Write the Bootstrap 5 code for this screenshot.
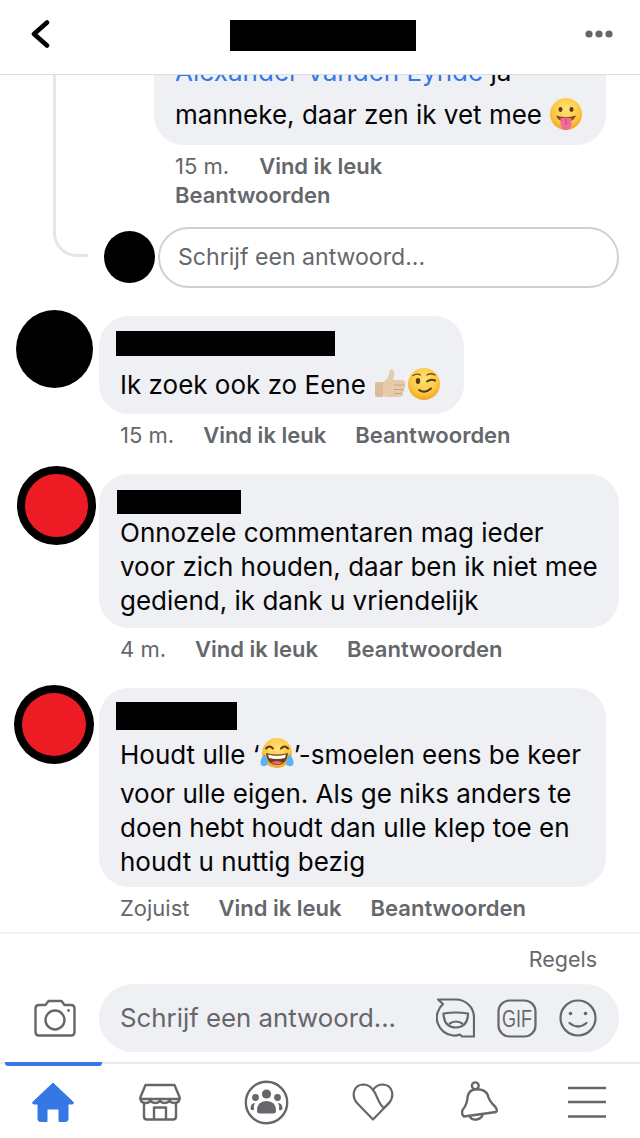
<!DOCTYPE html>
<html lang="nl">
<head>
    <title>Reacties</title>
    <meta charset="utf-8">
    <meta name="viewport" content="width=device-width, initial-scale=1">
    <link href="https://cdn.jsdelivr.net/npm/bootstrap@5.3.3/dist/css/bootstrap.min.css" rel="stylesheet">
    <script src="https://cdn.jsdelivr.net/npm/bootstrap@5.3.3/dist/js/bootstrap.bundle.min.js"></script>
    <style>
        html, body { height: 1138px; overflow: hidden; }
        body { font-family: Inter, "Liberation Sans", sans-serif; color: #050505; background: #fff; }
        .app { height: 1138px; }
        .topbar { height: 75px; border-bottom: 1px solid #dadde1; padding: 0 27px 0 31px; position: relative; z-index: 2; background: #fff; }
        .topbar svg { margin-bottom: 6px; }
        .redact { background: #000; }
        .title-bar { width: 186px; height: 31px; margin: -3px 0 0 10px; }
        .feed { height: 857px; overflow: hidden; position: relative; }

        /* nested reply, top is cut off by the header */
        .thread { display: flow-root; height: 213px; padding: 0 0 0 154px; position: relative; }
        .thread-line { position: absolute; left: 53px; top: 0; width: 35px; height: 182px; border-left: 3px solid #e4e6eb; border-bottom: 3px solid #e4e6eb; border-bottom-left-radius: 24px; }
        .bubble { background: #eff0f4; border-radius: 30px; font-size: 26px; line-height: 34px; }
        .bubble-nested { width: 452px; height: 110px; margin-top: -40px; padding: 0 21px; }
        .bubble-nested .cut-line { height: 62px; padding-top: 20px; }
        .mention { color: #3578e5; }
        .meta { font-size: 22px; line-height: 29px; color: #65676b; }
        .meta b { font-weight: 600; }
        .meta-nested { padding: 7px 0 0 21px; max-width: 260px; column-gap: 30px; }
        .meta-row { column-gap: 29px; height: 29px; padding-left: 21px; margin-top: 7px; white-space: nowrap; }
        .reply-row { position: absolute; left: 104px; top: 152px; }
        .dot-avatar { width: 51px; height: 52px; border-radius: 50%; background: #000; margin-top: 4px; }
        .reply-input { width: 461px; height: 61px; margin-left: 3px; border: 2px solid #ced0d4; border-radius: 31px; padding-left: 18px; font-size: 23.1px; color: #65676b; background: #fff; }

        .comment-a { margin-top: 28px; padding-left: 16px; }
        .comment-b { margin-top: 24px; padding-left: 17px; }
        .comment-c { margin-top: 24px; padding-left: 14px; }
        .avatar-black { width: 77px; height: 78px; border-radius: 50%; background: #000; margin: -6px 6px 0 0; flex: none; }
        .avatar-red { width: 79px; height: 79px; border-radius: 50%; background: #ed1c24; border: 8px solid #000; flex: none; }
        .comment-b .avatar-red { margin: -8px 3px 0 0; }
        .comment-c .avatar-red { margin: -3px 5px 0 0; width: 80px; }
        .bubble-a { width: 365px; height: 98px; padding: 15px 21px 0 21px; }
        .bubble-b { width: 520px; height: 154px; padding: 16px 18px 0 21px; }
        .bubble-c { width: 507px; height: 199px; padding: 14px 18px 0 21px; }
        .name-a { width: 219px; height: 25px; margin: 0 0 11px -4px; }
        .name-b { width: 124px; height: 24px; margin: 0 0 2px -3px; }
        .name-c { width: 121px; height: 28px; margin: 0 0 7px -4px; }
        .bubble-c .first-line { height: 40px; }
        .emoji { width: 34px; height: 34px; vertical-align: -7px; }

        .footer-box { height: 206px; border-top: 2px solid #f0f1f3; background: #fff; }
        .rules { height: 50px; padding: 10px 43px 0 0; font-size: 21.5px; line-height: 30px; color: #65676b; text-align: right; }
        .composer { height: 68px; padding-right: 21px; }
        .camera-slot { width: 99px; padding-left: 34px; }
        .pill { flex: 1; height: 68px; border-radius: 34px; background: #eff0f4; padding: 0 22px 0 21px; font-size: 25.8px; color: #65676b; }
        .pill-icons { column-gap: 22px; }
        .tabbar { height: 76px; margin-top: 10px; border-top: 2px solid #e9eaec; position: relative; }
        .tab-item { width: 106.67px; height: 74px; padding-top: 2px; }
        .tab-active-bar { position: absolute; left: 5px; top: -2px; width: 97px; height: 4px; background: #3578e5; border-radius: 0 0 3px 3px; }
    </style>
</head>
<body>
<svg width="0" height="0" class="position-absolute">
    <defs>
        <radialGradient id="faceFill" cx="50%" cy="35%" r="70%">
            <stop offset="0" stop-color="#ffe27a"/>
            <stop offset=".65" stop-color="#fbc53f"/>
            <stop offset="1" stop-color="#ee9a1e"/>
        </radialGradient>
    </defs>
</svg>

<div class="app d-flex flex-column">
    <div class="topbar d-flex align-items-center justify-content-between">
        <svg width="20" height="30" viewBox="0 0 20 30">
            <path d="M16 3.5 L3 15 L16 26.5" fill="none" stroke="#000" stroke-width="4.6" stroke-linecap="round" stroke-linejoin="round"/>
        </svg>
        <div class="redact title-bar"></div>
        <svg width="28" height="8" viewBox="0 0 28 8" fill="#65676b">
            <circle cx="4" cy="4" r="3.6"/><circle cx="14" cy="4" r="3.6"/><circle cx="24" cy="4" r="3.6"/>
        </svg>
    </div>

    <div class="feed">
        <div class="thread">
            <div class="thread-line"></div>
            <div class="bubble bubble-nested">
                <div class="cut-line text-nowrap"><span class="mention">Alexander Vanden Eynde</span> ja</div>
                <div class="text-nowrap">manneke, daar zen ik vet mee
                    <svg class="emoji" viewBox="0 0 34 34">
                        <circle cx="17" cy="17" r="16" fill="url(#faceFill)"/>
                        <ellipse cx="11.5" cy="12.5" rx="2" ry="2.4" fill="#5a3a12"/>
                        <ellipse cx="22.5" cy="12.5" rx="2" ry="2.4" fill="#5a3a12"/>
                        <path d="M7 18.5 Q17 22 27 18.5 Q25 23 21.5 24 L12.5 24 Q9 23 7 18.5Z" fill="#7a4a14"/>
                        <path d="M11.5 21 H22.5 V27 A5.5 6 0 0 1 11.5 27Z" fill="#f06a9a"/>
                        <path d="M17 22 V28" stroke="#c9416f" stroke-width="1"/>
                    </svg>
                </div>
            </div>
            <div class="meta meta-nested d-flex flex-wrap">
                <span>15 m.</span><b>Vind ik leuk</b><b>Beantwoorden</b>
            </div>
            <div class="reply-row d-flex align-items-start">
                <div class="dot-avatar"></div>
                <div class="reply-input d-flex align-items-center">Schrijf een antwoord...</div>
            </div>
        </div>

        <div class="comment-a d-flex">
            <div class="avatar-black"></div>
            <div>
                <div class="bubble bubble-a">
                    <div class="redact name-a"></div>
                    <div class="text-nowrap">Ik zoek ook zo Eene
                        <svg class="emoji" viewBox="0 0 34 34">
                            <path d="M4 15 H10 V30 H4 Q2 30 2 28 V17 Q2 15 4 15Z" fill="#d9bd9c"/>
                            <path d="M10 15 Q15 12 16 7 Q16.5 2 19 2.5 Q22 3.5 21 9 L20 13 H30 Q33 14 32 17 Q33 20 31 21.5 Q32 24 30 25.5 Q30.5 29 27 30 H14 Q11 30 10 28Z" fill="#e6cbab"/>
                            <path d="M21 18 H31 M21 22.5 H30.5 M21 26.5 H29" stroke="#c6a583" stroke-width="1.2" fill="none"/>
                        </svg><svg class="emoji" viewBox="0 0 34 34">
                            <circle cx="17" cy="17" r="16" fill="url(#faceFill)"/>
                            <ellipse cx="11" cy="14" rx="2.2" ry="3" fill="#5a3a12"/>
                            <path d="M6 8.5 Q10 6 13.5 8" fill="none" stroke="#7a4a14" stroke-width="1.4" stroke-linecap="round"/>
                            <path d="M20 14.5 Q24 11.5 28 13.5" fill="none" stroke="#5a3a12" stroke-width="2" stroke-linecap="round"/>
                            <path d="M20 8 Q24 5.5 28 8" fill="none" stroke="#7a4a14" stroke-width="1.4" stroke-linecap="round"/>
                            <path d="M12 23 Q18 27 24 21.5" fill="none" stroke="#5a3a12" stroke-width="2" stroke-linecap="round"/>
                        </svg>
                    </div>
                </div>
                <div class="meta meta-row d-flex">
                    <span>15 m.</span><b>Vind ik leuk</b><b>Beantwoorden</b>
                </div>
            </div>
        </div>

        <div class="comment-b d-flex">
            <div class="avatar-red"></div>
            <div>
                <div class="bubble bubble-b">
                    <div class="redact name-b"></div>
                    <div class="text-nowrap">Onnozele commentaren mag ieder</div>
                    <div class="text-nowrap">voor zich houden, daar ben ik niet mee</div>
                    <div class="text-nowrap">gediend, ik dank u vriendelijk</div>
                </div>
                <div class="meta meta-row d-flex">
                    <span>4 m.</span><b>Vind ik leuk</b><b>Beantwoorden</b>
                </div>
            </div>
        </div>

        <div class="comment-c d-flex">
            <div class="avatar-red"></div>
            <div>
                <div class="bubble bubble-c">
                    <div class="redact name-c"></div>
                    <div class="first-line text-nowrap">Houdt ulle ‘<svg class="emoji" viewBox="0 0 34 34">
                            <circle cx="17" cy="16" r="15" fill="url(#faceFill)"/>
                            <path d="M6 11.5 Q9.5 7.5 13 11.5" fill="none" stroke="#5a3a12" stroke-width="2" stroke-linecap="round"/>
                            <path d="M21 11.5 Q24.5 7.5 28 11.5" fill="none" stroke="#5a3a12" stroke-width="2" stroke-linecap="round"/>
                            <path d="M6 16 Q17 19 28 16 Q27 28 17 28 Q7 28 6 16Z" fill="#6e3d10"/>
                            <path d="M8 17.5 Q17 20 26 17.5 L25 21 Q17 23 9 21Z" fill="#fff"/>
                            <path d="M11 25.5 Q17 22.5 23 25.5 Q17 29.5 11 25.5Z" fill="#e8677e"/>
                            <path d="M4.5 17 Q-1 24 1 28 Q4.5 31 8 27 Q8.5 23 4.5 17Z" fill="#59b3ee"/>
                            <path d="M29.5 17 Q35 24 33 28 Q29.5 31 26 27 Q25.5 23 29.5 17Z" fill="#59b3ee"/>
                        </svg>’-smoelen eens be keer</div>
                    <div class="text-nowrap">voor ulle eigen. Als ge niks anders te</div>
                    <div class="text-nowrap">doen hebt houdt dan ulle klep toe en</div>
                    <div class="text-nowrap">houdt u nuttig bezig</div>
                </div>
                <div class="meta meta-row d-flex">
                    <span>Zojuist</span><b>Vind ik leuk</b><b>Beantwoorden</b>
                </div>
            </div>
        </div>
    </div>

    <div class="footer-box">
        <div class="rules">Regels</div>
        <div class="composer d-flex align-items-center">
            <div class="camera-slot">
                <svg class="d-block" width="42" height="38" viewBox="0 0 42 38" fill="none" stroke="#65676b" stroke-width="2.4" stroke-linejoin="round">
                    <path d="M5 6 H11.5 L14.5 2 H27.5 L30.5 6 H37 Q40.5 6 40.5 9.5 V33 Q40.5 36.5 37 36.5 H5 Q1.5 36.5 1.5 33 V9.5 Q1.5 6 5 6Z"/>
                    <circle cx="21" cy="21" r="9.5"/>
                    <circle cx="34.5" cy="11.5" r="1.4" fill="#65676b" stroke="none"/>
                </svg>
            </div>
            <div class="pill d-flex align-items-center justify-content-between">
                <span>Schrijf een antwoord...</span>
                <div class="pill-icons d-flex align-items-center">
                    <svg width="39" height="40" viewBox="0 0 39 40" fill="none" stroke="#65676b" stroke-width="2.2" stroke-linejoin="round">
                        <path d="M2 1.5 H20 A18 18 0 0 1 38 19.5 V38.5 H26 L24 36.5 Q20 38 17 37.5 A18 18 0 0 1 7 6 Z"/>
                        <path d="M7.5 15.5 Q20 13.5 32 15.5 Q32 29 20 29.5 Q8 29.5 7.5 15.5Z"/>
                        <path d="M13 26 Q20 21 27 26" />
                    </svg>
                    <svg width="40" height="39" viewBox="0 0 40 39" fill="none" stroke="#65676b" stroke-width="2.2">
                        <rect x="1.5" y="1.5" width="37" height="36" rx="11"/>
                        <text x="20" y="27.8" text-anchor="middle" font-family="Liberation Sans, sans-serif" font-size="23" fill="#65676b" stroke="none" textLength="30" lengthAdjust="spacingAndGlyphs">GIF</text>
                    </svg>
                    <svg width="38" height="38" viewBox="0 0 38 38" fill="none" stroke="#65676b" stroke-width="2.2" stroke-linecap="round">
                        <circle cx="19" cy="19" r="17.5"/>
                        <circle cx="11.5" cy="14.5" r="1.8" fill="#65676b" stroke="none"/>
                        <circle cx="26.5" cy="14.5" r="1.8" fill="#65676b" stroke="none"/>
                        <path d="M10.5 24 Q19 31 27.5 24"/>
                    </svg>
                </div>
            </div>
        </div>
        <div class="tabbar d-flex">
            <div class="tab-active-bar"></div>
            <div class="tab-item d-flex align-items-center justify-content-center">
                <svg width="42" height="40" viewBox="0 0 42 40" fill="#3578e5">
                    <path d="M21 1 L41 20 Q42 22 40 22 H36 V37 Q36 39.5 33.5 39.5 H27 V27 H15 V39.5 H8.5 Q6 39.5 6 37 V22 H2 Q0 22 1 20Z" stroke="#3578e5" stroke-linejoin="round"/>
                </svg>
            </div>
            <div class="tab-item d-flex align-items-center justify-content-center">
                <svg width="42" height="38" viewBox="0 0 42 38" fill="none" stroke="#65676b" stroke-width="2.4" stroke-linejoin="round">
                    <path d="M6.5 2 H35.5 L40.5 14 V16 H1.5 V14Z"/>
                    <path d="M1.5 15 Q1.5 20 6.5 20 Q11.5 20 11.5 16 Q11.5 20 16.5 20 Q21 20 21 16 Q21 20 25.5 20 Q30.5 20 30.5 16 Q30.5 20 35.5 20 Q40.5 20 40.5 15"/>
                    <path d="M5 20 V33.5 Q5 36.5 8 36.5 H34 Q37 36.5 37 33.5 V20"/>
                    <path d="M15 36.5 V24.5 H27 V36.5"/>
                </svg>
            </div>
            <div class="tab-item d-flex align-items-center justify-content-center">
                <svg width="45" height="45" viewBox="0 0 45 45">
                    <circle cx="22.5" cy="22.5" r="20.7" fill="none" stroke="#65676b" stroke-width="2.4"/>
                    <g fill="#65676b">
                        <circle cx="22.5" cy="14" r="4.6"/>
                        <circle cx="11.5" cy="17.5" r="3.4"/>
                        <circle cx="33.5" cy="17.5" r="3.4"/>
                        <path d="M13 31 Q13 21 22.5 21 Q32 21 32 31 Q32 33.5 29 33.5 H16 Q13 33.5 13 31Z"/>
                        <path d="M6.5 29 Q6.5 23 11 23 Q9 26 10 30 Q7 30.5 6.5 29Z"/>
                        <path d="M38.5 29 Q38.5 23 34 23 Q36 26 35 30 Q38 30.5 38.5 29Z"/>
                    </g>
                </svg>
            </div>
            <div class="tab-item d-flex align-items-center justify-content-center">
                <svg width="42" height="38" viewBox="0 0 42 38" fill="none" stroke="#65676b" stroke-width="2.2" stroke-linejoin="round" stroke-linecap="round">
                    <path d="M21 36.5 L5 20 C-1 13 1.5 2 11 1.5 C15 1.5 19 4 21 7 C23 4 27 1.5 31 1.5 C40.5 2 43 13 37 20 Z"/>
                    <path d="M21 7 C25 11 26 21 32 25 M32 25 L37 20"/>
                </svg>
            </div>
            <div class="tab-item d-flex align-items-center justify-content-center">
                <svg width="38" height="42" viewBox="0 0 38 42" fill="none" stroke="#65676b" stroke-width="2.4" stroke-linejoin="round">
                    <circle cx="14.3" cy="4.8" r="3.4"/>
                    <path d="M3 35.5 Q0 33 1.5 29 Q6 24 6.7 15.5 Q8 8.8 15 8.3 Q24 8 26.7 14 Q28 20 34 25.5 Q37 29 35 31 Z"/>
                    <path d="M8.3 34.7 A7 6.5 0 0 0 21.7 32.4"/>
                </svg>
            </div>
            <div class="tab-item d-flex align-items-center justify-content-center">
                <svg width="38" height="32" viewBox="0 0 38 32" stroke="#65676b" stroke-width="2.4">
                    <path d="M0 2 H38 M0 16 H38 M0 30.5 H38"/>
                </svg>
            </div>
        </div>
    </div>
</div>
</body>
</html>
